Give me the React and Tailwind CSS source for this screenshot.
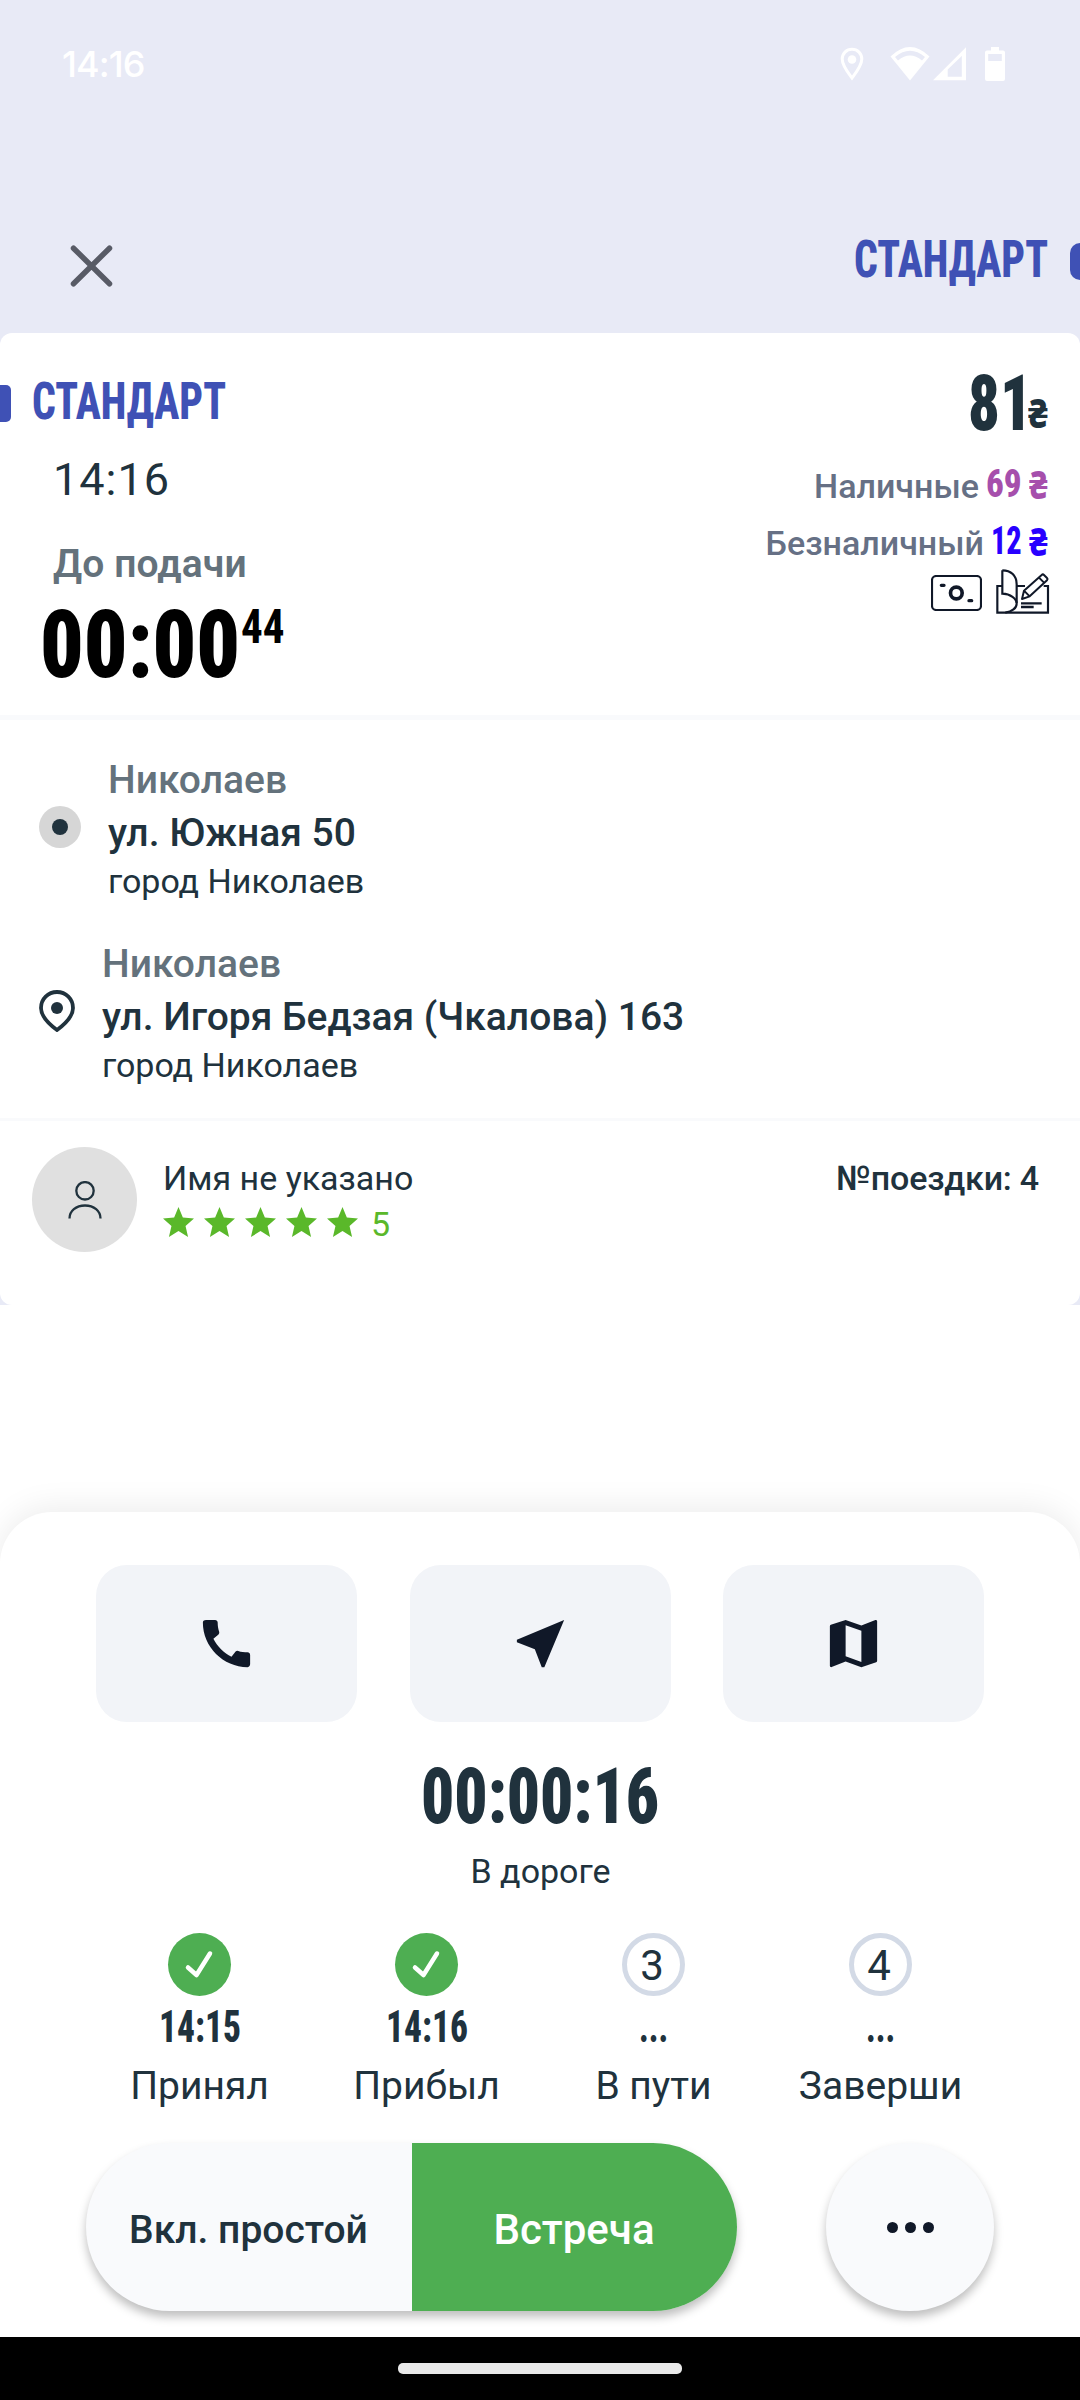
import React, { useLayoutEffect, useRef } from "react";
import { MdCall, MdNearMe, MdMap } from "react-icons/md";

// Condensed display text squeezed to a given width
function Narrow({ width, className = "", children }) {
  const ref = useRef(null);

  useLayoutEffect(() => {
    const el = ref.current;
    el.style.transform = `scaleX(${width / el.offsetWidth})`;
  }, [width, children]);

  return (
    <span
      className={`block shrink-0 whitespace-nowrap [font-stretch:75%] ${className}`}
      style={{ width }}
    >
      <span ref={ref} className="inline-block origin-left align-top">
        {children}
      </span>
    </span>
  );
}

function StatusBar() {
  return (
    <div className="flex h-32 items-center justify-between pl-[62px] pr-[75px] text-white">
      <span className="font-['Inter'] text-[36px] font-medium leading-none tracking-[-0.9px]">14:16</span>
      <div className="flex items-center">
        <svg className="mr-[26px] h-[34px] w-6" viewBox="0 0 24 34" fill="none">
          <path d="M12 2.2C6.4 2.2 2.2 6.6 2.2 12c0 6.6 5.6 13.4 9.8 19 4.2-5.6 9.8-12.4 9.8-19 0-5.4-4.2-9.8-9.8-9.8z" stroke="currentColor" strokeWidth="3" />
          <circle cx="12" cy="12.5" r="4.3" fill="currentColor" />
        </svg>
        <svg className="mr-[3px] h-[34px] w-10" viewBox="0 0 40 34" fill="currentColor">
          <path fillRule="evenodd" d="M0.5 9.5Q20-9.5 39.5 9.5L20 33.5zM5 10L8 13.5Q20 3.5 32 13.5L35 10Q20-2.5 5 10z" />
        </svg>
        <svg className="mr-[19px] h-[34px] w-[33px]" viewBox="0 0 33 34" fill="currentColor">
          <path fillRule="evenodd" d="M0 33.3L33 0.3v33zM14.7 22.5v7.3h14.1V9z" />
        </svg>
        <svg className="h-[34px] w-5" viewBox="0 0 20 34" fill="currentColor">
          <path fillRule="evenodd" d="M6 0h8v3.5h4a2 2 0 0 1 2 2V32a2 2 0 0 1-2 2H2a2 2 0 0 1-2-2V5.5a2 2 0 0 1 2-2h4zM3.2 7v7h13.6V7z" />
        </svg>
      </div>
    </div>
  );
}

function Header() {
  return (
    <div className="flex h-[205px] items-start justify-between overflow-hidden pl-[70px] pt-28">
      <svg className="mt-[5px] h-[42px] w-[43px]" viewBox="0 0 43 42" fill="none" stroke="#585b66" strokeWidth="5.5" strokeLinecap="round">
        <path d="M3.5 3.2L39.5 38.8M39.5 3.2L3.5 38.8" />
      </svg>
      <div className="flex items-start">
        <Narrow width={194} className="text-[52px] font-[850] leading-[39px] text-[#3f51b5]">СТАНДАРТ</Narrow>
        <span className="ml-[22px] mt-[3px] h-[37px] w-2.5 rounded-l-[10px] bg-[#3f51b5]" />
      </div>
    </div>
  );
}

function CashIcon() {
  return (
    <svg className="mt-1.5 h-9 w-[51px]" viewBox="0 0 153 108" fill="none" stroke="#101828">
      <rect x="3" y="3" width="147" height="102" rx="13" strokeWidth="6.5" />
      <circle cx="76" cy="54" r="17.5" strokeWidth="11" />
      <path d="M31 31h8M114 77h8" strokeWidth="10" strokeLinecap="round" />
    </svg>
  );
}

function ChequeIcon() {
  return (
    <svg className="h-[45px] w-[54px]" viewBox="0 0 162 135" fill="none" stroke="#101828" strokeWidth="6.5">
      <path d="M19 51H4v80h152V51h-13M62 51h25" />
      <path d="M19 4v70c24 1 43 14 43 30 0 13-14 24-34 27" />
      <path d="M19 4c26 0 43 16 43 42v56" />
      <path d="M78 90l6-25 53-47a5 5 0 0 1 7 0l9 9a5 5 0 0 1 0 7L101 82zM84 65l17 17M129 26l15 15" strokeWidth="6" strokeLinejoin="round" />
      <path d="M75 103h62M75 114h38" strokeWidth="7" />
    </svg>
  );
}

function PriceRow({ label, amount, width, color, className = "" }) {
  return (
    <div className={`flex h-[30px] items-start ${className}`}>
      <span className="mt-0.5 text-[34px] font-medium leading-7 text-[#667085]">{label}</span>
      <div className={`ml-[7px] flex ${color}`}>
        <Narrow width={width} className="text-[39px] font-extrabold leading-[29px]">{amount}</Narrow>
        <Narrow width={19} className="ml-[7px] font-['Noto_Sans'] text-[39px] font-extrabold leading-7">₴</Narrow>
      </div>
    </div>
  );
}

function Summary() {
  return (
    <div className="flex h-[382px] justify-between pr-8">
      <div className="pt-[49px]">
        <div className="flex">
          <span className="mt-[3px] h-[37px] w-[11px] rounded-r-[5px] bg-[#3f51b5]" />
          <Narrow width={194} className="ml-[21px] text-[52px] font-[850] leading-[39px] text-[#3f51b5]">СТАНДАРТ</Narrow>
        </div>
        <div className="ml-[53px] mt-9 text-[45px] font-[450] leading-[44px] tracking-[1px]">14:16</div>
        <div className="ml-[53px] mt-[42px] text-[39px] font-semibold leading-10 tracking-[0.1px] text-[#64727c]">До подачи</div>
        <div className="ml-10 mt-[26px] flex items-start text-black">
          <Narrow width={200} className="text-[95px] font-black leading-[69px]">00:00</Narrow>
          <Narrow width={44} className="ml-px mt-px text-[48px] font-bold leading-8">44</Narrow>
        </div>
      </div>
      <div className="flex flex-col items-end pt-[42px]">
        <div className="flex items-start">
          <Narrow width={64} className="text-[78px] font-black leading-[57px]">81</Narrow>
          <Narrow width={20} className="-mb-px -ml-1 mt-[23px] font-['Noto_Sans'] text-[41px] font-extrabold leading-[29px]">₴</Narrow>
        </div>
        <PriceRow label="Наличные" amount="69" width={36} color="text-[#a64fac]" className="mt-[38px]" />
        <PriceRow label="Безналичный" amount="12" width={31} color="text-[#2800ff]" className="mt-[27px]" />
        <div className="-mr-0.5 mt-3 flex items-start gap-3.5">
          <CashIcon />
          <ChequeIcon />
        </div>
      </div>
    </div>
  );
}

function Address({ icon, city, street, region }) {
  return (
    <div className="flex gap-[27px]">
      <div className="pt-[47px]">{icon}</div>
      <div>
        <div className="mt-px text-[39px] font-medium leading-10 text-[#64727c]">{city}</div>
        <div className="mt-[13px] text-[39px] font-medium leading-10">{street}</div>
        <div className="mt-2.5 text-[34px] leading-9">{region}</div>
      </div>
    </div>
  );
}

function Client() {
  return (
    <div className="flex h-[184px] items-start pl-8 pr-[41px] pt-[26px]">
      <div className="flex size-[105px] items-center justify-center rounded-full bg-[#e0e0e0]">
        <svg className="h-[38px] w-[34px]" viewBox="0 0 34 38" fill="none" stroke="#20323d" strokeWidth="2.3">
          <circle cx="17" cy="9.8" r="8.7" />
          <path d="M1.5 37.5C1.5 30 8 24.5 17 24.5s15.5 5.5 15.5 13" />
        </svg>
      </div>
      <div className="ml-[26px] mt-[13px]">
        <div className="text-[34px] leading-9">Имя не указано</div>
        <div className="mt-[11px] flex gap-2.5 text-[#5ab82a]">
          {[1, 2, 3, 4, 5].map((star) => (
            <svg key={star} className="h-[30px] w-[31px]" viewBox="2 2 20 19" preserveAspectRatio="none" fill="currentColor">
              <path d="M12 17.27L18.18 21l-1.64-7.03L22 9.24l-7.19-.61L12 2 9.19 8.63 2 9.24l5.46 4.73L5.82 21z" />
            </svg>
          ))}
          <span className="ml-[3px] text-[34px] leading-[34px]">5</span>
        </div>
      </div>
      <div className="ml-auto mt-[13px] text-[34px] font-medium leading-9 tracking-[-0.2px]">№поездки: 4</div>
    </div>
  );
}

const steps = [
  { id: 1, time: "14:15", width: 82, label: "Принял", done: true },
  { id: 2, time: "14:16", width: 82, label: "Прибыл", done: true },
  { id: 3, time: "...", width: 29, label: "В пути", done: false },
  { id: 4, time: "...", width: 29, label: "Заверши", done: false },
];

function Step({ step }) {
  return (
    <div className="flex w-[227px] flex-col items-center">
      {step.done ? (
        <div className="size-[63px] rounded-full bg-[#4eae52]">
          <svg className="size-full" viewBox="0 0 63 63" fill="none" stroke="white" strokeWidth="4.5" strokeLinecap="round" strokeLinejoin="round">
            <path d="M20 34.5l8.5 7.5L42 20.5" />
          </svg>
        </div>
      ) : (
        <div className="flex size-[63px] items-center justify-center rounded-full border-[5.5px] border-[#d3dae6] pr-[3px] pt-[3px] text-[42px] leading-none">
          {step.id}
        </div>
      )}
      <Narrow width={step.width} className="mt-[15px] text-[44px] font-extrabold leading-[33px]">{step.time}</Narrow>
      <div className="mt-[22px] text-[39px] leading-10">{step.label}</div>
    </div>
  );
}

function BottomSheet() {
  return (
    <div className="h-[825px] rounded-t-[52px] bg-white pt-[53px] shadow-[0_-4px_32px_rgba(0,0,0,0.08)]">
      <div className="flex justify-between px-24">
        {[MdCall, MdNearMe, MdMap].map((Icon, index) => (
          <button key={index} className="flex h-[157px] w-[261px] items-center justify-center rounded-[31px] bg-[#f2f4f8] text-[#101828]">
            <Icon className="size-[63px]" />
          </button>
        ))}
      </div>
      <div className="mt-[47px] flex justify-center">
        <Narrow width={238} className="text-[77px] font-black leading-[56px]">00:00:16</Narrow>
      </div>
      <div className="mt-7 pl-px text-center text-[34px] leading-9">В дороге</div>
      <div className="mt-11 flex px-[86px]">
        {steps.map((step) => (
          <Step key={step.id} step={step} />
        ))}
      </div>
      <div className="mt-[37px] flex justify-between px-[86px]">
        <div className="flex h-[168px] w-[651px] overflow-hidden rounded-full bg-[#f9fafc] shadow-[0_6px_10px_rgba(0,0,0,0.25)]">
          <button className="w-[326px] pr-px pt-1.5 text-[39px] font-medium">Вкл. простой</button>
          <button className="flex-1 bg-[#4eae52] pr-px pt-1 text-[42px] font-medium text-white">Встреча</button>
        </div>
        <button className="flex size-[168px] items-center justify-center gap-[7px] rounded-full bg-[#f9fafc] shadow-[0_6px_10px_rgba(0,0,0,0.25)]">
          <span className="size-[11px] rounded-full bg-[#101828]" />
          <span className="size-[11px] rounded-full bg-[#101828]" />
          <span className="size-[11px] rounded-full bg-[#101828]" />
        </button>
      </div>
    </div>
  );
}

export default function App() {
  return (
    <div className="h-[2400px] w-[1080px] overflow-hidden bg-white font-['Roboto',sans-serif] text-[#20323d]">
      <div className="bg-[#e8eaf6]">
        <StatusBar />
        <Header />
        <div className="h-[972px] overflow-hidden rounded-xl bg-white">
          <Summary />
          <div className="h-[5px] bg-[#f9fafc]" />
          <div className="flex h-[398px] flex-col gap-11 pl-[39px] pt-[39px]">
            <Address
              icon={
                <div className="flex size-[42px] items-center justify-center rounded-full bg-[#d6d6d6]">
                  <span className="size-4 rounded-full bg-[#20323d]" />
                </div>
              }
              city="Николаев"
              street="ул. Южная 50"
              region="город Николаев"
            />
            <Address
              icon={
                <svg className="h-[42px] w-9" viewBox="0 0 36 42" fill="none">
                  <path d="M18 2C9 2 2 9 2 18c0 8 6.5 15 16 22 9.5-7 16-14 16-22C34 9 27 2 18 2z" stroke="#20323d" strokeWidth="3.8" />
                  <circle cx="18" cy="18" r="6" fill="#20323d" />
                </svg>
              }
              city="Николаев"
              street="ул. Игоря Бедзая (Чкалова) 163"
              region="город Николаев"
            />
          </div>
          <div className="h-[3px] bg-[#f9fafc]" />
          <Client />
        </div>
      </div>
      <div className="h-[207px]" />
      <BottomSheet />
      <div className="flex h-[63px] justify-center bg-black pt-[26px]">
        <div className="h-[11px] w-[284px] rounded-[5px] bg-[#e9e9e9]" />
      </div>
    </div>
  );
}
